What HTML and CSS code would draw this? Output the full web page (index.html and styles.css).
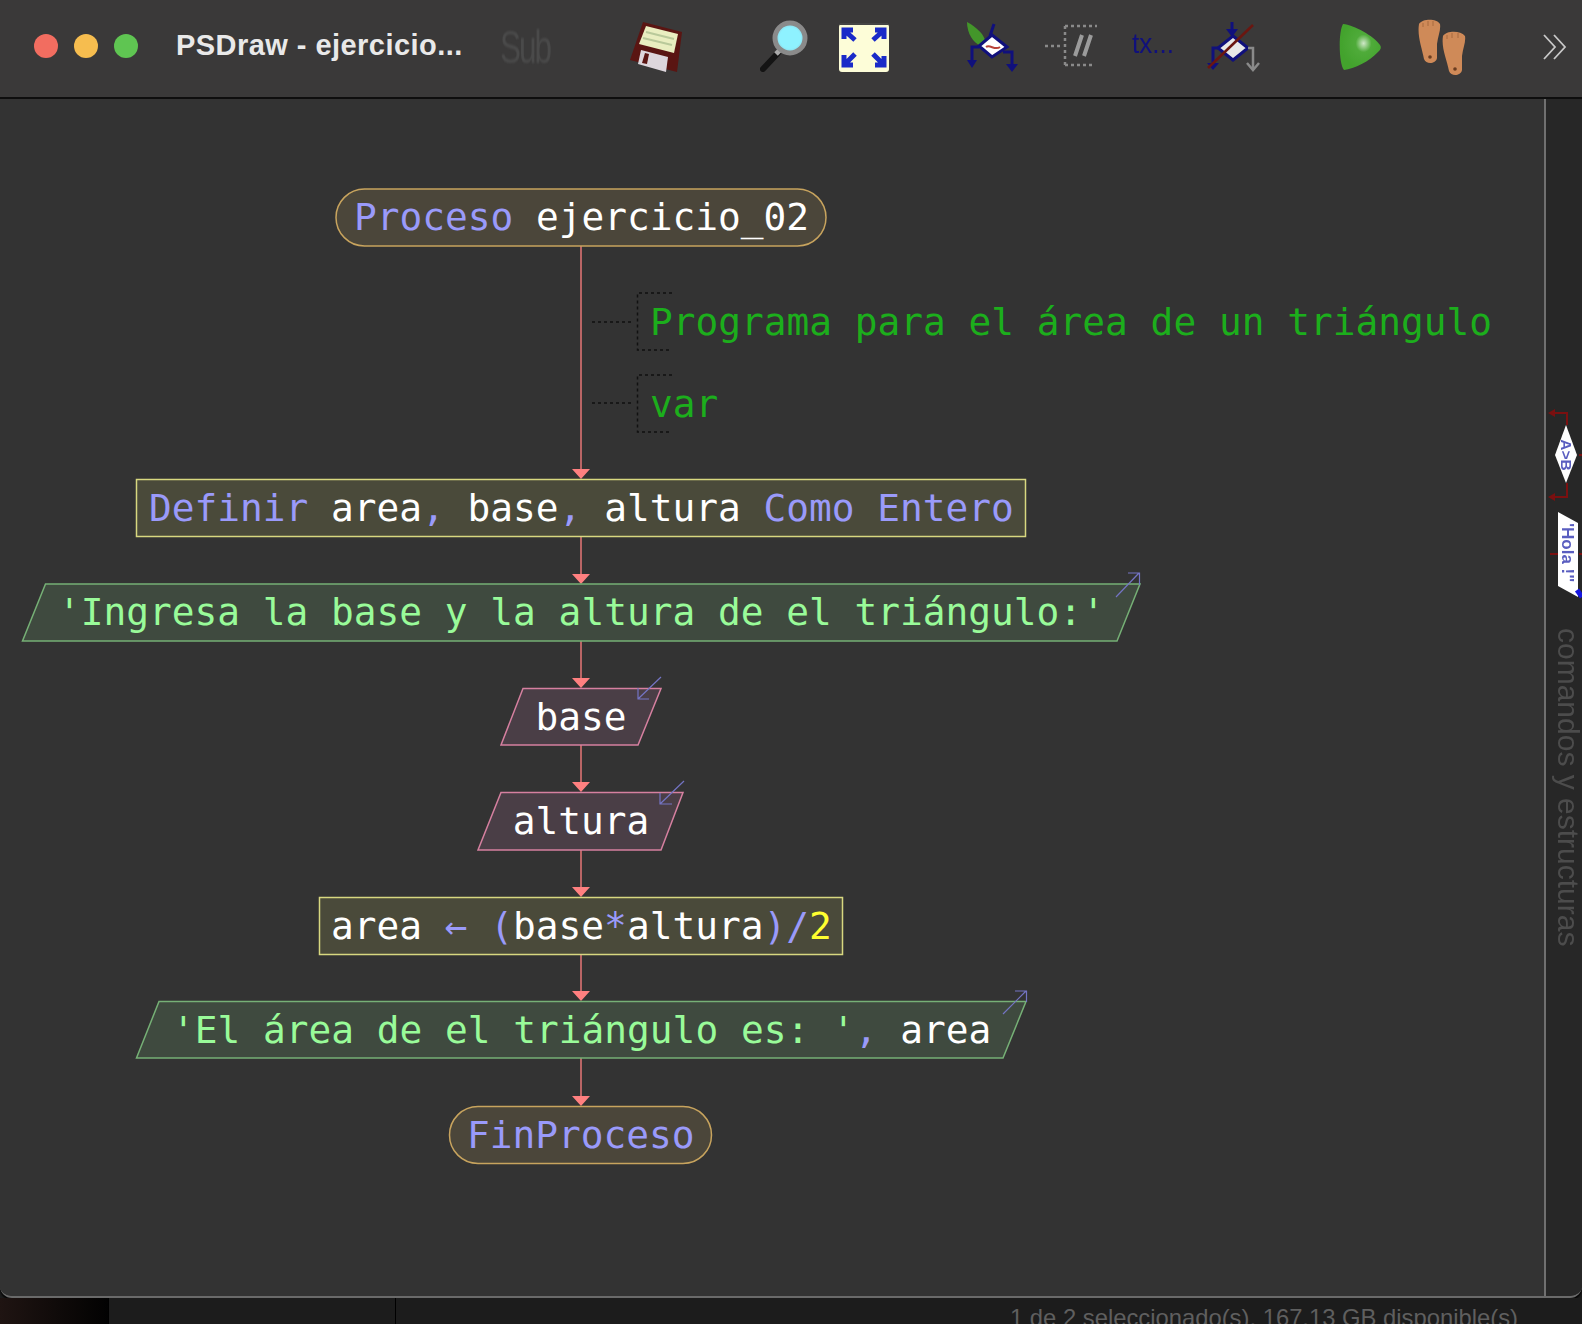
FILE: index.html
```html
<!DOCTYPE html>
<html lang="es">
<head>
    <meta charset="UTF-8">
    <title>PSDraw - ejercicio_02</title>
    <link rel="stylesheet" href="styles.css">
</head>
<body>
    <div class="window">
        <header class="toolbar">
            <div class="traffic">
                <span class="dot red"></span>
                <span class="dot yellow"></span>
                <span class="dot green"></span>
            </div>
            <div class="title">PSDraw - ejercicio...</div>
            <span class="tool-sub">Sub</span>

            <!-- save -->
            <svg class="tool t-save" width="54" height="56" viewBox="0 0 54 56">
                <path d="M13 2 L52 12 L47 52 L0 40 Z" fill="#5a1512"/>
                <path d="M16 6 L48 14 L44 33 L9 24 Z" fill="#e9eec0"/>
                <path d="M16 12 L44 19 M13 18 L42 25" stroke="#b9c99a" stroke-width="2"/>
                <path d="M11 30 L38 37 L36 52 L8 44 Z" fill="#ddd6dc"/>
                <path d="M15 33 L19 34 L17 44 L12 43 Z" fill="#5a1512"/>
            </svg>

            <!-- zoom -->
            <svg class="tool t-zoom" width="50" height="54" viewBox="0 0 50 54">
                <path d="M5 50 L20 34" stroke="#141414" stroke-width="6" stroke-linecap="round"/>
                <path d="M18 35 L24 29" stroke="#aaa" stroke-width="5"/>
                <circle cx="32" cy="19" r="15" fill="#8fe9f7" stroke="#8a8a8a" stroke-width="5"/>
                <circle cx="32" cy="19" r="11" fill="#8ef2ff"/>
            </svg>

            <!-- fit to window -->
            <svg class="tool t-fit" width="52" height="50" viewBox="0 0 52 50">
                <rect x="1" y="1" width="50" height="48" rx="3" fill="#fdfdd8"/>
                <path d="M2 1 H50" stroke="#444" stroke-width="2"/>
                <g fill="none" stroke="#1a2bc8" stroke-width="5">
                    <path d="M17 17 L7 8 M6 16 V7 H15"/>
                    <path d="M35 17 L45 8 M37 7 H46 V16"/>
                    <path d="M17 31 L7 41 M6 32 V42 H15"/>
                    <path d="M35 31 L45 41 M46 33 V42 H37"/>
                </g>
            </svg>

            <!-- si -->
            <svg class="tool t-if" width="56" height="56" viewBox="0 0 56 56">
                <path d="M2 3 C12 8 20 17 20 22 L16 27 C8 24 2 14 2 3 Z" fill="#43962a"/>
                <path d="M16 27 L20 21 L24 28 L21 31 Z" fill="#f2ee2a"/>
                <path d="M29 5 L25 17" stroke="#10107c" stroke-width="3"/>
                <path d="M27 16 L42 28 L27 38 L14 27 Z" fill="#fff" stroke="#10107c" stroke-width="3"/>
                <path d="M21 28 C25 25 30 32 35 28" fill="none" stroke="#b8433a" stroke-width="2"/>
                <g fill="none" stroke="#10107c" stroke-width="3">
                    <path d="M14 28 H7 V46"/>
                    <path d="M38 33 H47 V50"/>
                </g>
                <path d="M2 41 H12 L7 49 Z M41 45 H53 L47 53 Z" fill="#10107c"/>
            </svg>

            <!-- comentario -->
            <svg class="tool t-comment" width="54" height="46" viewBox="0 0 54 46">
                <path d="M0 22 H18 M20 2 H52 M20 2 V41 M20 41 H50" stroke="#8a8a8a" stroke-width="2.5" stroke-dasharray="3 3" fill="none"/>
                <path d="M30 32 L37 11 M39 32 L46 11" stroke="#9b9b9b" stroke-width="4"/>
            </svg>

            <span class="tool-tx">tx...</span>

            <!-- sin -->
            <svg class="tool t-else" width="56" height="54" viewBox="0 0 56 54">
                <path d="M26 0 V12" stroke="#10107c" stroke-width="3"/>
                <path d="M20 7 H32 L26 15 Z" fill="#10107c"/>
                <path d="M27 14 L42 26 L27 38 L12 26 Z" fill="#e8e8e8" stroke="#10107c" stroke-width="3"/>
                <path d="M12 26 H7 V44" fill="none" stroke="#10107c" stroke-width="3"/>
                <path d="M1 41 H13 L7 48 Z" fill="#10107c"/>
                <path d="M42 26 H47 V47" fill="none" stroke="#8a8a8a" stroke-width="2.5"/>
                <path d="M41 41 L47 48 L53 41" fill="none" stroke="#8a8a8a" stroke-width="2.5"/>
                <path d="M2 46 L47 3" stroke="#6b1610" stroke-width="2.5"/>
            </svg>

            <!-- ejecutar -->
            <svg class="tool t-run" width="44" height="48" viewBox="0 0 44 48">
                <defs>
                    <radialGradient id="shine" cx="0.58" cy="0.42" r="0.55">
                        <stop offset="0" stop-color="#cfe8c8"/>
                        <stop offset="0.35" stop-color="#4fab3a"/>
                        <stop offset="1" stop-color="#43a32d"/>
                    </radialGradient>
                </defs>
                <path d="M5 1 C16 2 36 13 42 22 C44 25 42 27 40 29 C32 38 16 46 6 47 C1 42 0 10 5 1 Z" fill="url(#shine)"/>
            </svg>

            <!-- paso a paso -->
            <svg class="tool t-steps" width="50" height="58" viewBox="0 0 50 58">
                <g fill="#cf8a58">
                    <path d="M3 6 C6 1 20 0 24 6 C25 12 22 18 21 26 L21 40 C20 46 10 47 8 41 C6 30 1 18 3 6 Z"/>
                    <path d="M27 18 C30 13 44 12 49 18 C50 24 47 30 46 38 L46 52 C45 58 35 59 33 53 C31 42 25 30 27 18 Z"/>
                </g>
                <path d="M7 5 V9 M12 3 V8 M17 3 V8 M31 17 V21 M36 15 V20 M42 15 V20" stroke="#a86a3e" stroke-width="1"/>
                <circle cx="14" cy="39" r="1.8" fill="#6a3d20"/>
                <circle cx="39" cy="51" r="1.8" fill="#6a3d20"/>
            </svg>

            <svg class="tool t-more" width="26" height="28" viewBox="0 0 26 28">
                <path d="M2 2 L13 14 L2 26 M12 2 L23 14 L12 26" fill="none" stroke="#c8c8c8" stroke-width="1.8"/>
            </svg>
        </header>

        <div class="workspace">
            <main class="canvas">
                <svg class="flow" width="1544" height="1197" viewBox="0 99 1544 1197">
                    <!-- connectors -->
                    <path class="link" d="M581 246 V470 M581 536 V574 M581 641 V679 M581 745 V783 M581 850 V888 M581 954 V992 M581 1058 V1097"/>
                    <path class="arrow" d="M572 469 H590 L581 479 Z M572 574 H590 L581 584 Z M572 678 H590 L581 688 Z M572 782 H590 L581 792 Z M572 887 H590 L581 897 Z M572 991 H590 L581 1001 Z M572 1096 H590 L581 1106 Z"/>

                    <!-- comments -->
                    <path class="dots" d="M592 322 H634 M672 293 H637.5 V350 H672"/>
                    <path class="dots" d="M592 403 H634 M672 375 H637.5 V432 H672"/>
                    <text class="code comment" x="650" y="335">Programa para el área de un triángulo</text>
                    <text class="code comment" x="650" y="417">var</text>

                    <!-- proceso -->
                    <rect class="shape-term" x="336" y="189" width="490" height="57" rx="28.5"/>
                    <text class="code" x="354" y="230"><tspan class="kw">Proceso</tspan> ejercicio_02</text>

                    <!-- definir -->
                    <rect class="shape-def" x="136.5" y="479.5" width="889" height="57"/>
                    <text class="code" x="149" y="521"><tspan class="kw">Definir</tspan> area<tspan class="kw">,</tspan> base<tspan class="kw">,</tspan> altura <tspan class="kw">Como Entero</tspan></text>

                    <!-- escribir -->
                    <path class="shape-out" d="M45.5 584 H1140 L1117 641 H22.5 Z"/>
                    <text class="code str" x="58" y="625">'Ingresa la base y la altura de el triángulo:'</text>
                    <path class="io-mark" d="M1116 597 L1139 573 M1128 573 H1139.5 V585"/>

                    <!-- leer base -->
                    <path class="shape-in" d="M523 688.5 H661 L638 745 H501 Z"/>
                    <text class="code" x="581" y="730" text-anchor="middle">base</text>
                    <path class="io-mark" d="M661 677 L638 699 M638 688 V699 H649"/>

                    <!-- leer altura -->
                    <path class="shape-in" d="M501 792.5 H683 L661 850 H478 Z"/>
                    <text class="code" x="581" y="834" text-anchor="middle">altura</text>
                    <path class="io-mark" d="M684 781 L660 804 M660 793 V804 H672"/>

                    <!-- asignar -->
                    <rect class="shape-def" x="319.5" y="897.5" width="523" height="57"/>
                    <text class="code" x="331" y="939">area <tspan class="kw">←</tspan> <tspan class="kw">(</tspan>base<tspan class="kw">*</tspan>altura<tspan class="kw">)/</tspan><tspan class="num">2</tspan></text>

                    <!-- escribir resultado -->
                    <path class="shape-out" d="M159 1001.5 H1026 L1003 1058 H136.5 Z"/>
                    <text class="code str" x="172" y="1043">'El área de el triángulo es: '<tspan class="kw">,</tspan> <tspan class="plain">area</tspan></text>
                    <path class="io-mark" d="M1003 1014 L1026 991 M1015 991 H1026.5 V1002"/>

                    <!-- fin -->
                    <rect class="shape-term" x="449.5" y="1106.5" width="262" height="57" rx="28.5"/>
                    <text class="code" x="467" y="1148"><tspan class="kw">FinProceso</tspan></text>
                </svg>
            </main>
            <aside class="palette">
                <svg class="pal-shapes" width="36" height="200" viewBox="0 0 36 200">
                    <g class="pal-red">
                        <path d="M6 8 H21 V20 M21 78 V92 H6 M4 149 H12 M33 50 H36 M33 149 H36"/>
                    </g>
                    <path d="M2 8 L9 4 V12 Z M2 92 L9 88 V96 Z" fill="#7a1010"/>
                    <path d="M20 20 L31 50 L20 78 L9 50 Z" fill="#fff"/>
                    <path d="M12 107 L32 118 V192 L12 181 Z" fill="#fff"/>
                    <path d="M31 185 L36 192" stroke="#1616e0" stroke-width="5"/>
                    <text class="pal-text" transform="translate(15 50) rotate(90)" text-anchor="middle">A&gt;B</text>
                    <text class="pal-text hola" transform="translate(16 118) rotate(90)">'Hola !"</text>
                </svg>
                <div class="pal-label">comandos y estructuras</div>
            </aside>
        </div>
    </div>
    <footer class="finder">
        <span class="divider d1"></span>
        <span class="divider d2"></span>
        <span class="status">1 de 2 seleccionado(s), 167,13 GB disponible(s)</span>
    </footer>
</body>
</html>
```

FILE: styles.css
```css
* {
    box-sizing: border-box;
}

html, body {
    margin: 0;
    padding: 0;
    height: 1324px;
    overflow: hidden;
    background: #1c1c1c;
    font-family: "Liberation Sans", Arial, sans-serif;
}

.window {
    height: 1298px;
    display: flex;
    flex-direction: column;
    background: #333;
    border-bottom: 2px solid #6a6a6a;
    border-radius: 0 0 12px 12px;
    box-shadow: 0 2px 2px #000;
    overflow: hidden;
    position: relative;
}

/* title bar */
.toolbar {
    position: relative;
    height: 99px;
    flex: none;
    background: #3a3939;
    border-bottom: 2px solid #0e0e0e;
}

.traffic {
    position: absolute;
    left: 34px;
    top: 34px;
    display: flex;
    gap: 16px;
}

.dot {
    width: 24px;
    height: 24px;
    border-radius: 50%;
}

.red { background: #f26d60; }
.yellow { background: #f6bd4f; }
.green { background: #5fc552; }

.title {
    position: absolute;
    left: 176px;
    top: 29px;
    color: #e9e9e9;
    font-size: 29px;
    font-weight: 700;
    letter-spacing: 0.45px;
    white-space: nowrap;
}

.tool {
    position: absolute;
    filter: blur(0.7px);
}

.tool-sub {
    position: absolute;
    left: 500px;
    top: 19px;
    color: #4a4a4a;
    font-size: 47px;
    letter-spacing: -3px;
    transform: scaleX(0.67);
    transform-origin: left center;
    filter: blur(0.9px);
}

.tool-tx {
    position: absolute;
    left: 1132px;
    top: 28px;
    color: #10107c;
    font-size: 28px;
    filter: blur(0.5px);
    transform: scaleX(0.93);
    transform-origin: left center;
}

.t-save { left: 630px; top: 20px; }
.t-zoom { left: 758px; top: 19px; }
.t-fit { left: 838px; top: 23px; }
.t-if { left: 965px; top: 19px; }
.t-comment { left: 1045px; top: 24px; }
.t-else { left: 1206px; top: 22px; }
.t-run { left: 1338px; top: 23px; }
.t-steps { left: 1416px; top: 18px; }
.t-more { left: 1542px; top: 33px; }

/* main area */
.workspace {
    flex: 1;
    display: flex;
    min-height: 0;
}

.canvas {
    flex: 1;
    background: #333;
    min-width: 0;
}

.flow {
    display: block;
}

.palette {
    width: 38px;
    flex: none;
    position: relative;
    background: #272727;
    border-left: 2px solid #707070;
}

.pal-shapes {
    position: absolute;
    left: 0;
    top: 306px;
    filter: blur(0.6px);
}

.pal-red {
    fill: none;
    stroke: #7a1010;
    stroke-width: 2;
}

.pal-text {
    font-size: 15.5px;
    font-weight: 700;
    fill: #5a5ec0;
}

.pal-text.hola {
    font-size: 17px;
}

.pal-label {
    position: absolute;
    left: 5px;
    top: 529px;
    color: #4c4c4c;
    font-size: 30px;
    line-height: 34px;
    white-space: nowrap;
    writing-mode: vertical-rl;
    filter: blur(0.5px);
}

/* flowchart */
.code {
    font-family: "DejaVu Sans Mono", monospace;
    font-size: 37.8px;
    fill: #fff;
    white-space: pre;
}

.kw { fill: #9a9afa; }
.num { fill: #ffff30; }
.plain { fill: #fff; }
.str { fill: #99fb99; }
.comment { fill: #1cae1c; }

.link {
    fill: none;
    stroke: #b96565;
    stroke-width: 2;
}

.arrow { fill: #ff8080; }

.dots {
    fill: none;
    stroke: #111;
    stroke-width: 1.5;
    stroke-dasharray: 3 3;
}

.shape-term {
    fill: #4b463a;
    stroke: #c8a45e;
    stroke-width: 1.5;
}

.shape-def {
    fill: #4a4a3a;
    stroke: #d8d880;
    stroke-width: 1.5;
}

.shape-out {
    fill: #3f4a3f;
    stroke: #76b076;
    stroke-width: 1.5;
}

.shape-in {
    fill: #4a3e46;
    stroke: #d680a0;
    stroke-width: 1.5;
}

.io-mark {
    fill: none;
    stroke: #7474c4;
    stroke-width: 1.2;
}

/* finder strip behind the window */
.finder {
    position: relative;
    height: 26px;
    background: #1c1c1c;
}

.divider {
    position: absolute;
    top: 0;
    bottom: 0;
    width: 1px;
    background: #000;
}

.d1 { left: 108px; }
.d2 { left: 395px; }

.finder::before {
    content: "";
    position: absolute;
    left: 0;
    top: 0;
    bottom: 0;
    width: 108px;
    background: linear-gradient(90deg, #1f1412, #020202);
}

.status {
    position: absolute;
    left: 1010px;
    top: 6px;
    color: #5f5f5f;
    font-size: 23.8px;
    white-space: nowrap;
}
```
